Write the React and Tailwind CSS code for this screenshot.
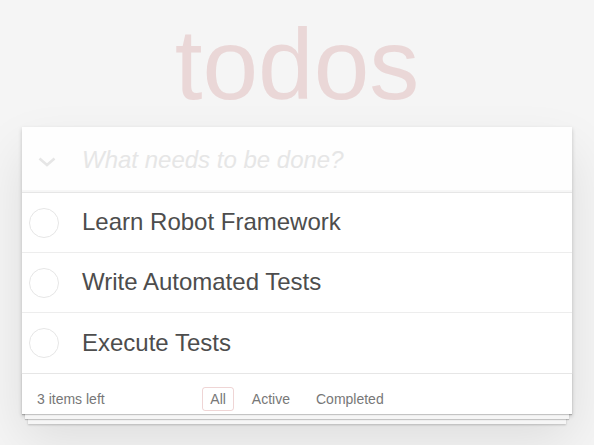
import React, { useState } from "react";

const font = "font-['Liberation_Sans',Arial,sans-serif]";

function Chevron() {
  return (
    <svg width="18" height="10" viewBox="0 0 18 10" className="block">
      <polyline points="1.5,1.5 9,8 16.5,1.5" fill="none" stroke="#e6e6e6" strokeWidth="2.6" strokeLinejoin="miter" />
    </svg>
  );
}

function Circle() {
  return (
    <svg width="30" height="30" viewBox="0 0 30 30" className="block">
      <circle cx="15" cy="15" r="14.5" fill="none" stroke="#e6e6e6" strokeWidth="1" />
    </svg>
  );
}

export default function App() {
  const [todos] = useState([
    "Learn Robot Framework",
    "Write Automated Tests",
    "Execute Tests",
  ]);
  const filters = ["All", "Active", "Completed"];

  return (
    <div className={`min-h-screen bg-[#f5f5f5] text-[14px] leading-[19.6px] text-[#4d4d4d] ${font}`}>
      <div className="h-[127px] pt-[14px]">
        <h1 className="text-center text-[100px] leading-[100px] font-thin text-[rgba(175,47,47,0.15)]">
          todos
        </h1>
      </div>

      <section className="max-w-[550px] mx-auto bg-white shadow-[0_2px_4px_0_rgba(0,0,0,0.2),0_25px_50px_0_rgba(0,0,0,0.1)]">
        <header className="flex h-[65px] bg-[rgba(0,0,0,0.003)] shadow-[inset_0_-2px_1px_rgba(0,0,0,0.03)]">
          <div className="w-[60px] shrink-0 pl-[16px] pt-[30px]">
            <Chevron />
          </div>
          <input
            className={`flex-1 min-w-0 h-[65px] py-[16px] pr-[16px] text-[24px] leading-[33.6px] bg-transparent outline-none placeholder:italic placeholder:text-[#e6e6e6] ${font}`}
            placeholder="What needs to be done?"
          />
        </header>

        <ul className="border-t border-[#e6e6e6]">
          {todos.map((t, i) => (
            <li
              key={t}
              className={`flex items-center h-[60px] ${i < todos.length - 1 ? "border-b border-[#ededed]" : "h-[59px]"}`}
            >
              <div className="w-[60px] shrink-0 pl-[7px]">
                <Circle />
              </div>
              <label className="text-[24px] leading-[28.8px] text-[#4d4d4d]">{t}</label>
            </li>
          ))}
        </ul>

        <footer className="grid grid-cols-[1fr_auto_1fr] items-center h-[41px] px-[15px] py-[10px] border-t border-[#e6e6e6] text-[#777] leading-[20px] shadow-[0_1px_1px_rgba(0,0,0,0.2),0_8px_0_-3px_#f6f6f6,0_9px_1px_-3px_rgba(0,0,0,0.2),0_16px_0_-6px_#f6f6f6,0_17px_2px_-6px_rgba(0,0,0,0.2)]">
          <span>3 items left</span>
          <ul className="flex gap-[4px]">
            {filters.map((f, i) => (
              <li key={f}>
                <a
                  className={`block m-[3px] px-[7px] py-[3px] leading-[16px] rounded-[3px] border ${
                    i === 0 ? "border-[rgba(175,47,47,0.2)]" : "border-transparent"
                  }`}
                >
                  {f}
                </a>
              </li>
            ))}
          </ul>
          <span />
        </footer>
      </section>
    </div>
  );
}
